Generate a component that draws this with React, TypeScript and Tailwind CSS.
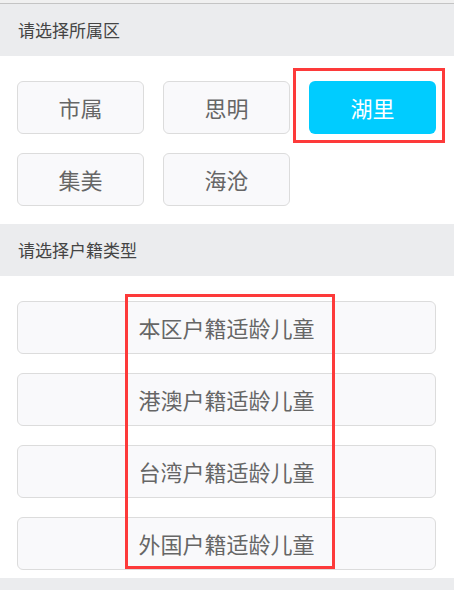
import React from "react";

const districts = ["市属", "思明", "湖里", "集美", "海沧"];
const types = ["本区户籍适龄儿童", "港澳户籍适龄儿童", "台湾户籍适龄儿童", "外国户籍适龄儿童"];

export default function App() {
  const font = { fontFamily: '"Noto Sans CJK SC", "Noto Sans", sans-serif' };
  return (
    <div className="relative w-[454px] h-[590px] bg-white overflow-hidden" style={font}>
      <div className="h-[3px] bg-[#f0f0f0]" />
      <div className="h-px bg-[#c4c4c4]" />
      <div className="h-[52px] bg-[#ebecee] flex items-center pl-[18px] text-[17px] text-[#444]">
        请选择所属区
      </div>
      <div className="pt-[25px] pb-[18px] px-[17px] grid grid-cols-[127px_127px_127px] gap-x-[19px] gap-y-[19px]">
        {districts.map((d) => {
          const sel = d === "湖里";
          return (
            <div
              key={d}
              className={
                sel
                  ? "h-[53px] rounded-[6px] bg-[#00ccff] text-white flex items-center justify-center text-[22px]"
                  : "h-[53px] rounded-[6px] border border-[#dcdcdc] bg-[#f9f9fb] text-[#666] flex items-center justify-center text-[22px]"
              }
            >
              {d}
            </div>
          );
        })}
      </div>
      <div className="h-[52px] bg-[#ebecee] flex items-center pl-[18px] text-[17px] text-[#444]">
        请选择户籍类型
      </div>
      <div className="pt-[25px] pb-[8px] pl-[17px] pr-[18px] flex flex-col gap-[19px]">
        {types.map((t) => (
          <div
            key={t}
            className="h-[53px] rounded-[6px] border border-[#dcdcdc] bg-[#f9f9fb] text-[#666] flex items-center justify-center text-[22px]"
          >
            {t}
          </div>
        ))}
      </div>
      <div className="h-[20px] bg-[#ebecee]" />

      <div className="absolute left-[293px] top-[68px] w-[152px] h-[75px] border-[3px] border-[#fd3a3a]" />
      <div className="absolute left-[125px] top-[294px] w-[210px] h-[275px] border-[3px] border-[#fd3a3a]" />
    </div>
  );
}
